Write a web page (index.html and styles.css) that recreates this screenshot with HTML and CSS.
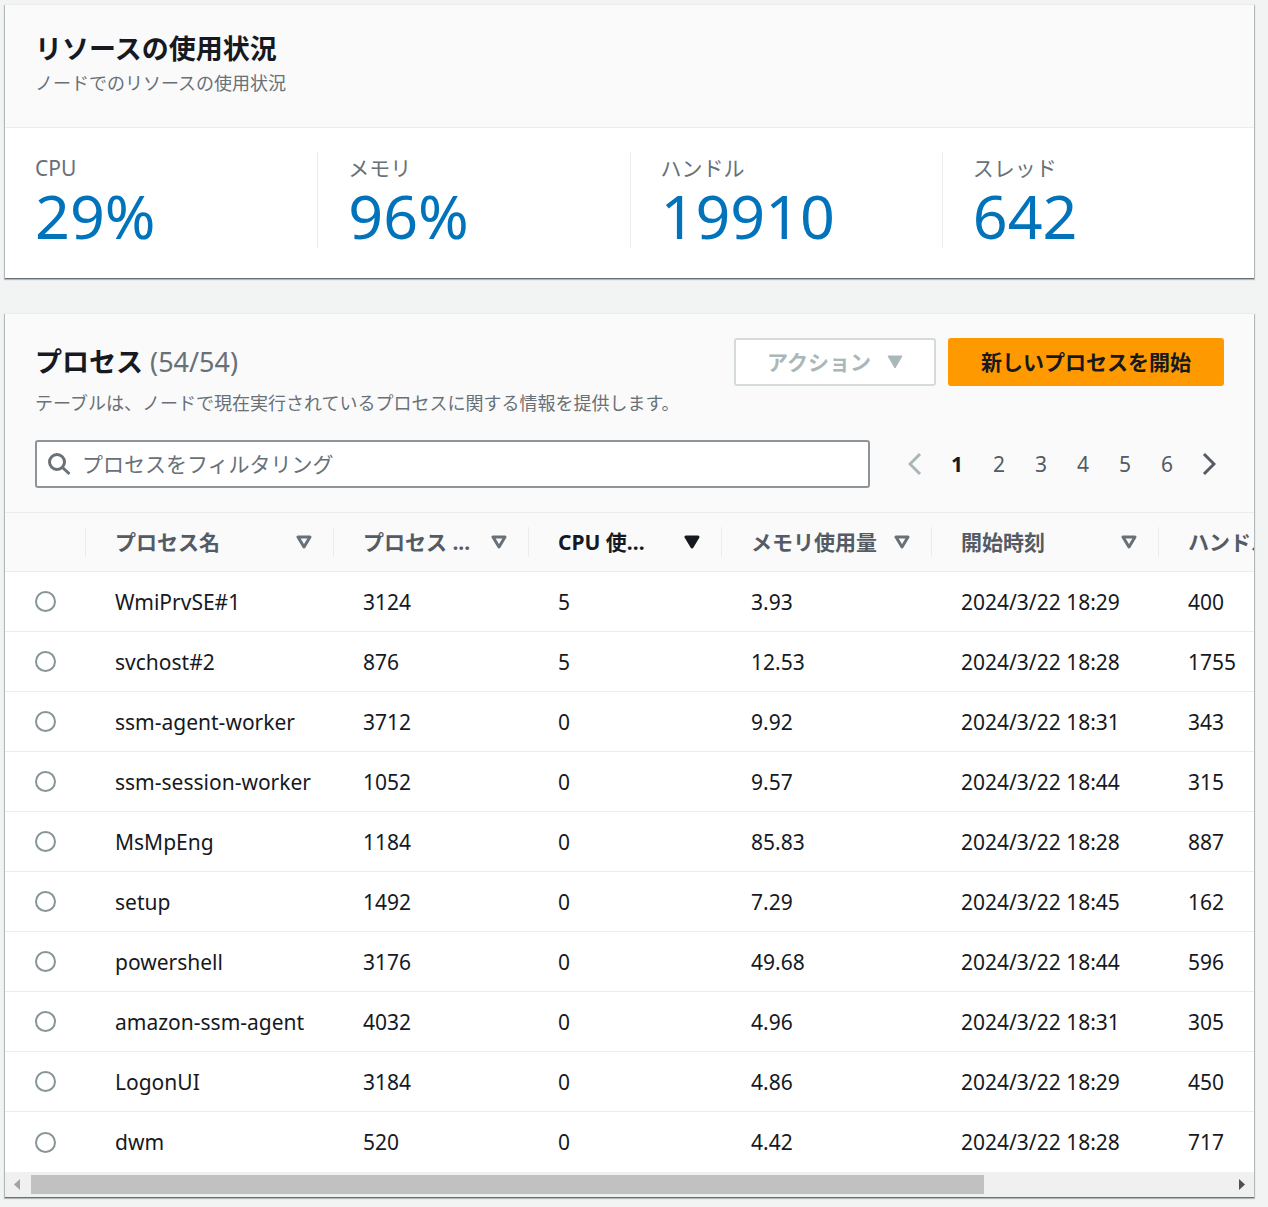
FILE: index.html
```html
<!DOCTYPE html>
<html lang="ja">
<head>
<meta charset="utf-8">
<meta name="viewport" content="width=device-width, initial-scale=1">
<title>リソースの使用状況</title>
<link rel="stylesheet" href="styles.css">
</head>
<body>
<main class="page">
  <section class="card">
    <header class="card-header">
      <h2 class="title">リソースの使用状況</h2>
      <p class="description">ノードでのリソースの使用状況</p>
    </header>
    <dl class="metrics">
      <div class="metric"><dt>CPU</dt><dd>29%</dd></div>
      <div class="metric"><dt>メモリ</dt><dd>96%</dd></div>
      <div class="metric"><dt>ハンドル</dt><dd>19910</dd></div>
      <div class="metric"><dt>スレッド</dt><dd>642</dd></div>
    </dl>
  </section>

  <section class="card">
    <header class="table-header">
      <div class="heading-row">
        <h2 class="title">プロセス <span class="counter">(54/54)</span></h2>
        <div class="actions">
          <button class="button" type="button" disabled>アクション
            <svg class="caret" viewBox="0 0 16 14" aria-hidden="true"><path d="M1 1h14L8 13z" fill="currentColor" stroke="currentColor" stroke-linejoin="round"/></svg>
          </button>
          <button class="button button-primary" type="button">新しいプロセスを開始</button>
        </div>
      </div>
      <p class="description">テーブルは、ノードで現在実行されているプロセスに関する情報を提供します。</p>
      <div class="tools">
        <label class="search">
          <svg class="search-icon" viewBox="0 0 24 24" aria-hidden="true"><circle cx="10" cy="10" r="7.500"/><path d="M15.500 15.500l7 6.500"/></svg>
          <input class="search-input" type="text" placeholder="プロセスをフィルタリング" aria-label="プロセスをフィルタリング">
        </label>
        <nav class="pagination" aria-label="ページ">
          <button class="arrow" type="button" disabled aria-label="前へ"><svg viewBox="0 0 14 24" aria-hidden="true"><path d="M12 2L2 12l10 10"/></svg></button>
          <div class="pages">
            <button class="page-number" type="button" aria-current="page">1</button>
            <button class="page-number" type="button">2</button>
            <button class="page-number" type="button">3</button>
            <button class="page-number" type="button">4</button>
            <button class="page-number" type="button">5</button>
            <button class="page-number" type="button">6</button>
          </div>
          <button class="arrow" type="button" aria-label="次へ"><svg viewBox="0 0 14 24" aria-hidden="true"><path d="M2 2l10 10L2 22"/></svg></button>
        </nav>
      </div>
    </header>

    <div class="table-scroll">
      <table class="processes">
        <colgroup>
          <col class="col-select"><col class="col-name"><col class="col-id"><col class="col-cpu"><col class="col-memory"><col class="col-start"><col>
        </colgroup>
        <thead>
          <tr>
            <td></td>
            <th scope="col"><div class="column"><span class="label">プロセス名</span><svg class="sort" viewBox="0 0 16 14" aria-hidden="true"><path d="M2 2h12L8 12z"/></svg></div></th>
            <th scope="col"><div class="column"><span class="label">プロセス ...</span><svg class="sort" viewBox="0 0 16 14" aria-hidden="true"><path d="M2 2h12L8 12z"/></svg></div></th>
            <th scope="col" aria-sort="descending"><div class="column"><span class="label">CPU 使...</span><svg class="sort" viewBox="0 0 16 14" aria-hidden="true"><path d="M2 2h12L8 12z"/></svg></div></th>
            <th scope="col"><div class="column"><span class="label">メモリ使用量</span><svg class="sort" viewBox="0 0 16 14" aria-hidden="true"><path d="M2 2h12L8 12z"/></svg></div></th>
            <th scope="col"><div class="column"><span class="label">開始時刻</span><svg class="sort" viewBox="0 0 16 14" aria-hidden="true"><path d="M2 2h12L8 12z"/></svg></div></th>
            <th scope="col"><div class="column"><span class="label">ハンドル</span></div></th>
          </tr>
        </thead>
        <tbody>
          <tr><td><input class="radio" type="radio" name="process" aria-label="WmiPrvSE#1"></td><td>WmiPrvSE#1</td><td>3124</td><td>5</td><td>3.93</td><td>2024/3/22 18:29</td><td>400</td></tr>
          <tr><td><input class="radio" type="radio" name="process" aria-label="svchost#2"></td><td>svchost#2</td><td>876</td><td>5</td><td>12.53</td><td>2024/3/22 18:28</td><td>1755</td></tr>
          <tr><td><input class="radio" type="radio" name="process" aria-label="ssm-agent-worker"></td><td>ssm-agent-worker</td><td>3712</td><td>0</td><td>9.92</td><td>2024/3/22 18:31</td><td>343</td></tr>
          <tr><td><input class="radio" type="radio" name="process" aria-label="ssm-session-worker"></td><td>ssm-session-worker</td><td>1052</td><td>0</td><td>9.57</td><td>2024/3/22 18:44</td><td>315</td></tr>
          <tr><td><input class="radio" type="radio" name="process" aria-label="MsMpEng"></td><td>MsMpEng</td><td>1184</td><td>0</td><td>85.83</td><td>2024/3/22 18:28</td><td>887</td></tr>
          <tr><td><input class="radio" type="radio" name="process" aria-label="setup"></td><td>setup</td><td>1492</td><td>0</td><td>7.29</td><td>2024/3/22 18:45</td><td>162</td></tr>
          <tr><td><input class="radio" type="radio" name="process" aria-label="powershell"></td><td>powershell</td><td>3176</td><td>0</td><td>49.68</td><td>2024/3/22 18:44</td><td>596</td></tr>
          <tr><td><input class="radio" type="radio" name="process" aria-label="amazon-ssm-agent"></td><td>amazon-ssm-agent</td><td>4032</td><td>0</td><td>4.96</td><td>2024/3/22 18:31</td><td>305</td></tr>
          <tr><td><input class="radio" type="radio" name="process" aria-label="LogonUI"></td><td>LogonUI</td><td>3184</td><td>0</td><td>4.86</td><td>2024/3/22 18:29</td><td>450</td></tr>
          <tr><td><input class="radio" type="radio" name="process" aria-label="dwm"></td><td>dwm</td><td>520</td><td>0</td><td>4.42</td><td>2024/3/22 18:28</td><td>717</td></tr>
        </tbody>
      </table>
    </div>
    <div class="scrollbar" aria-hidden="true">
      <svg class="scroll-arrow scroll-arrow-off" viewBox="0 0 26 25"><path d="M15 7v11l-6-5.500z"/></svg>
      <div class="track"><div class="thumb" style="width: 79.6%"></div></div>
      <svg class="scroll-arrow" viewBox="0 0 26 25"><path d="M11 7v11l6-5.500z"/></svg>
    </div>
  </section>
</main>
</body>
</html>
```
FILE: styles.css
```css
* {
  box-sizing: border-box;
}

body {
  margin: 0;
  background: #f2f3f3;
  color: #16191f;
  font-family: "Noto Sans", "Noto Sans CJK JP", sans-serif;
  font-size: 21px;
  line-height: 30px;
}

button,
input {
  font: inherit;
}

.page {
  display: flex;
  flex-direction: column;
  gap: 36px;
  padding: 5px 14px 9px 5px;
}

.card {
  background: #fff;
  box-shadow: 0 1px 1px 0 #687078, 0 1px 1px 1px rgba(0, 28, 36, 0.2);
}

.card-header {
  padding: 24px 30px 30px;
  background: #fafafa;
  border-bottom: 1px solid #eaeded;
}

.title {
  margin: 0;
  font-size: 27px;
  line-height: 40px;
  font-weight: 700;
}

.counter {
  color: #687078;
  font-weight: 400;
}

.description {
  margin: 0;
  color: #687078;
  font-size: 18px;
  line-height: 28px;
}

.metrics {
  display: grid;
  grid-template-columns: repeat(4, 1fr);
  margin: 0;
  padding: 24px 0 30px;
}

.metric {
  padding: 0 30px;
}

.metric + .metric {
  border-left: 1px solid #eaeded;
}

.metric dt {
  color: #687078;
  line-height: 32px;
}

.metric dd {
  margin: 0;
  color: #0073bb;
  font-size: 61px;
  line-height: 64px;
}

.table-header {
  padding: 24px 30px;
  background: #fafafa;
  border-bottom: 1px solid #eaeded;
}

.heading-row {
  display: flex;
  align-items: center;
  justify-content: space-between;
}

.actions {
  display: flex;
  gap: 12px;
}

.button {
  display: flex;
  align-items: center;
  gap: 16px;
  height: 48px;
  padding: 0 31px;
  background: #fff;
  border: 2px solid #d5dbdb;
  border-radius: 3px;
  color: #aab7b8;
  font-weight: 700;
}

.button-primary {
  background: #ff9900;
  border-color: #ff9900;
  color: #16191f;
}

.caret {
  width: 16px;
  height: 14px;
}

.table-header .description {
  margin-top: 3px;
}

.tools {
  display: flex;
  align-items: center;
  gap: 30px;
  margin-top: 23px;
}

.search {
  display: flex;
  flex: 1;
  align-items: center;
  gap: 11px;
  height: 48px;
  padding: 0 10px;
  background: #fff;
  border: 2px solid #8d959b;
  border-radius: 3px;
}

.search-icon {
  width: 24px;
  height: 24px;
  fill: none;
  stroke: #687078;
  stroke-width: 3;
}

.search-input {
  flex: 1;
  min-width: 0;
  padding: 0;
  background: none;
  border: 0;
  outline: 0;
  color: #16191f;
}

.search-input::placeholder {
  color: #687078;
}

.pagination {
  display: flex;
  align-items: center;
  gap: 6px;
}

.pages {
  display: flex;
}

.page-number,
.arrow {
  padding: 0;
  background: none;
  border: 0;
  color: #545b64;
}

.page-number {
  width: 42px;
}

.page-number[aria-current] {
  color: #16191f;
  font-weight: 700;
}

.arrow {
  display: flex;
  justify-content: center;
  width: 30px;
}

.arrow:disabled {
  color: #aab7b8;
}

.arrow svg {
  width: 14px;
  height: 24px;
  fill: none;
  stroke: currentColor;
  stroke-width: 3;
}

.table-scroll {
  overflow-x: auto;
  scrollbar-width: none;
}

.processes {
  width: 1570px;
  table-layout: fixed;
  border-collapse: separate;
  border-spacing: 0;
}

.col-select { width: 80px; }
.col-name { width: 248px; }
.col-id { width: 195px; }
.col-cpu { width: 193px; }
.col-memory { width: 210px; }
.col-start { width: 227px; }

.processes th,
.processes td {
  height: 60px;
  padding: 0 0 0 30px;
  border-bottom: 1px solid #eaeded;
  text-align: left;
  white-space: nowrap;
}

.processes thead th,
.processes thead td {
  height: 59px;
  padding: 0;
  background: #fafafa;
  color: #545b64;
}

.processes tbody tr:last-child td {
  border-bottom: 0;
}

.column {
  display: flex;
  align-items: center;
  justify-content: space-between;
  padding: 0 21px 0 29px;
  border-left: 1px solid #eaeded;
}

.sort {
  width: 16px;
  height: 14px;
  fill: none;
  stroke: #687078;
  stroke-width: 3;
  stroke-linejoin: round;
}

.processes th[aria-sort] {
  color: #16191f;
}

.processes th[aria-sort] .sort {
  fill: #16191f;
  stroke: #16191f;
}

.radio {
  display: block;
  appearance: none;
  width: 21px;
  height: 21px;
  margin: 0;
  background: #fff;
  border: 2px solid #879596;
  border-radius: 50%;
}

.radio:checked {
  border: 6px solid #0073bb;
}

.scrollbar {
  display: flex;
  height: 25px;
  background: #f0f0f0;
}

.scroll-arrow {
  width: 26px;
  height: 25px;
  fill: #505050;
}

.scroll-arrow-off {
  fill: #a3a3a3;
}

.track {
  flex: 1;
  padding: 3px 0;
}

.thumb {
  height: 19px;
  background: #c1c1c1;
}
```
